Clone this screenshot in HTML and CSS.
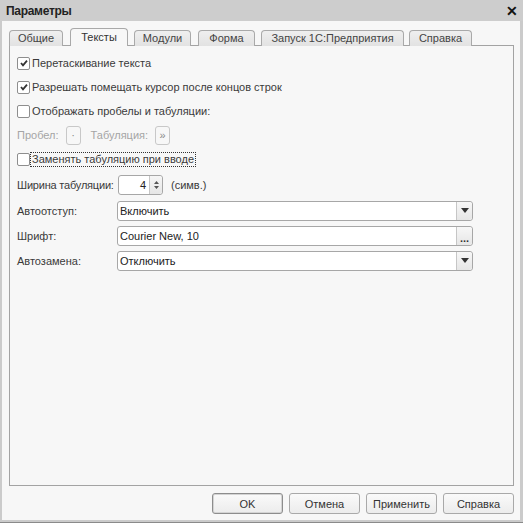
FILE: index.html
```html
<!DOCTYPE html>
<html lang="ru">
<head>
  <meta charset="UTF-8">
  <title>Параметры</title>
  <link rel="stylesheet" href="styles.css">
</head>
<body>
  <div class="window">
    <div class="titlebar">
      <span class="title">Параметры</span>
      <span class="close">✕</span>
    </div>

    <div class="client">
      <div class="tabs">
        <div class="tab">Общие</div>
        <div class="tab active">Тексты</div>
        <div class="tab">Модули</div>
        <div class="tab">Форма</div>
        <div class="tab">Запуск 1С:Предприятия</div>
        <div class="tab">Справка</div>
      </div>

      <div class="panel">
        <div class="row">
          <span class="check checked"><svg viewBox="0 0 10 10" width="10" height="10"><path d="M2 5 L4 7.3 L8 2.6" fill="none" stroke="#333" stroke-width="1.8"/></svg></span>
          <span class="label">Перетаскивание текста</span>
        </div>
        <div class="row">
          <span class="check checked"><svg viewBox="0 0 10 10" width="10" height="10"><path d="M2 5 L4 7.3 L8 2.6" fill="none" stroke="#333" stroke-width="1.8"/></svg></span>
          <span class="label">Разрешать помещать курсор после концов строк</span>
        </div>
        <div class="row">
          <span class="check"></span>
          <span class="label">Отображать пробелы и табуляции:</span>
        </div>
        <div class="row disabled">
          <span>Пробел:</span>
          <span class="mini-btn">·</span>
          <span class="tab-label">Табуляция:</span>
          <span class="mini-btn">»</span>
        </div>
        <div class="row">
          <span class="check"></span>
          <span class="label focus">Заменять табуляцию при вводе</span>
        </div>

        <div class="row field-row first-field">
          <span class="field-label">Ширина табуляции:</span>
          <span class="spin-box">
            <span class="spin-value">4</span>
            <span class="spin-btn">
              <svg viewBox="0 0 7 12" width="7" height="12"><path d="M1 5 L3.5 2 L6 5 Z M1 7 L3.5 10 L6 7 Z" fill="#555"/></svg>
            </span>
          </span>
          <span class="unit">(симв.)</span>
        </div>
        <div class="row field-row">
          <span class="field-label">Автоотступ:</span>
          <span class="input">
            <span class="input-text">Включить</span>
            <span class="input-btn"><svg viewBox="0 0 8 5" width="8" height="5"><path d="M0 0 L8 0 L4 5 Z" fill="#333"/></svg></span>
          </span>
        </div>
        <div class="row field-row">
          <span class="field-label">Шрифт:</span>
          <span class="input">
            <span class="input-text">Courier New, 10</span>
            <span class="input-btn dots">...</span>
          </span>
        </div>
        <div class="row field-row">
          <span class="field-label">Автозамена:</span>
          <span class="input">
            <span class="input-text">Отключить</span>
            <span class="input-btn"><svg viewBox="0 0 8 5" width="8" height="5"><path d="M0 0 L8 0 L4 5 Z" fill="#333"/></svg></span>
          </span>
        </div>
      </div>

      <div class="buttons">
        <button class="default">OK</button>
        <button>Отмена</button>
        <button>Применить</button>
        <button>Справка</button>
      </div>
    </div>
  </div>
</body>
</html>
```

FILE: styles.css
```css
body {
  margin: 0;
  padding: 0;
  font-family: 'Liberation Sans', Arial, sans-serif;
  font-size: 11px;
  color: #3a3a3a;
  background: #f7f7f7;
}

.window {
  width: 523px;
  height: 523px;
  box-sizing: border-box;
  display: flex;
  flex-direction: column;
  background: #f7f7f7;
  border-bottom: 1px solid #8a8a8a;
}

.titlebar {
  height: 21px;
  flex-shrink: 0;
  background: #cdcdcd;
  display: flex;
  align-items: center;
  justify-content: space-between;
  padding: 0 5px 0 6px;
}

.title {
  font-weight: bold;
  font-size: 12px;
  color: #222;
  letter-spacing: -0.3px;
}

.close {
  font-weight: bold;
  font-size: 14px;
  color: #111;
}

.client {
  flex: 1;
  display: flex;
  flex-direction: column;
  border-left: 2px solid #cbcbcb;
  border-right: 3px solid #cbcbcb;
  border-bottom: 2px solid #cbcbcb;
  padding: 7px 6px 0 7px;
}

.tabs {
  display: flex;
  align-items: flex-end;
  gap: 6px;
  height: 18px;
  position: relative;
  z-index: 1;
  margin-bottom: -1px;
}

.tab {
  box-sizing: border-box;
  height: 16px;
  line-height: 15px;
  text-align: center;
  border: 1px solid #a9a9a9;
  border-bottom: none;
  border-radius: 4px 4px 0 0;
  background: linear-gradient(#efefef, #e2e2e2);
  color: #444;
}

.tab:nth-child(1) { width: 54px; }
.tab:nth-child(2) { width: 58px; margin-left: 1px; }
.tab:nth-child(3) { width: 57px; }
.tab:nth-child(4) { width: 57px; margin-left: 1px; }
.tab:nth-child(5) { width: 143px; }
.tab:nth-child(6) { width: 63px; margin-left: -1px; }

.tab.active {
  height: 18px;
  line-height: 17px;
  background: #f7f7f7;
  color: #333;
}

.panel {
  flex: 1;
  border: 1px solid #a3a3a3;
  padding: 5px 7px 0 7px;
  display: flex;
  flex-direction: column;
}

.row {
  height: 24px;
  display: flex;
  align-items: center;
  white-space: nowrap;
}

.check {
  width: 11px;
  height: 11px;
  border: 1px solid #8e8e8e;
  border-radius: 2px;
  background: #fff;
  margin-right: 1px;
  display: flex;
  align-items: center;
  justify-content: center;
}

.label {
  padding: 0 1px;
}

.focus {
  outline: 1px dotted #333;
  outline-offset: 0;
  line-height: 13px;
}

.disabled {
  color: #a5a5a5;
}

.mini-btn {
  width: 13px;
  height: 17px;
  border: 1px solid #c8c8c8;
  border-radius: 3px;
  margin-left: 7px;
  display: flex;
  align-items: center;
  justify-content: center;
  font-size: 11px;
  color: #888;
}

.tab-label {
  margin-left: 10px;
}

.field-row {
  height: 25px;
}

.first-field {
  height: 27px;
  padding-top: 1px;
  box-sizing: border-box;
}

.field-label {
  width: 100px;
}

.first-field .field-label {
  letter-spacing: -0.2px;
}

.spin-box {
  width: 43px;
  height: 18px;
  margin-left: 1px;
  border: 1px solid #a7a7a7;
  border-radius: 3px;
  background: #fff;
  display: flex;
}

.spin-value {
  flex: 1;
  text-align: right;
  padding-right: 3px;
  line-height: 18px;
  color: #222;
}

.spin-btn {
  width: 12px;
  border-left: 1px solid #c6c6c6;
  background: linear-gradient(#f6f6f6, #e6e6e6);
  border-radius: 0 3px 3px 0;
  display: flex;
  align-items: center;
  justify-content: center;
}

.unit {
  margin-left: 8px;
}

.input {
  width: 354px;
  height: 18px;
  border: 1px solid #a7a7a7;
  border-radius: 3px;
  background: #fff;
  display: flex;
}

.input-text {
  flex: 1;
  padding-left: 2px;
  line-height: 18px;
  color: #222;
}

.input-btn {
  width: 15px;
  border-left: 1px solid #c6c6c6;
  background: linear-gradient(#f7f7f7, #e6e6e6);
  border-radius: 0 3px 3px 0;
  display: flex;
  align-items: center;
  justify-content: center;
}

.input-btn.dots {
  align-items: flex-end;
  font-size: 11px;
  line-height: 14px;
  color: #333;
  font-weight: bold;
}

.buttons {
  display: flex;
  justify-content: flex-end;
  gap: 6px;
  padding: 7px 0 6px 0;
}

button {
  width: 71px;
  height: 21px;
  font-family: 'Liberation Sans', Arial, sans-serif;
  font-size: 11px;
  color: #333;
  background: linear-gradient(#fafafa, #ececec);
  border: 1px solid #a9a9a9;
  border-radius: 3px;
  padding: 0;
}

button.default {
  border-color: #8d8d8d;
  box-shadow: inset 0 0 0 1px #d4d4d4;
}
```
